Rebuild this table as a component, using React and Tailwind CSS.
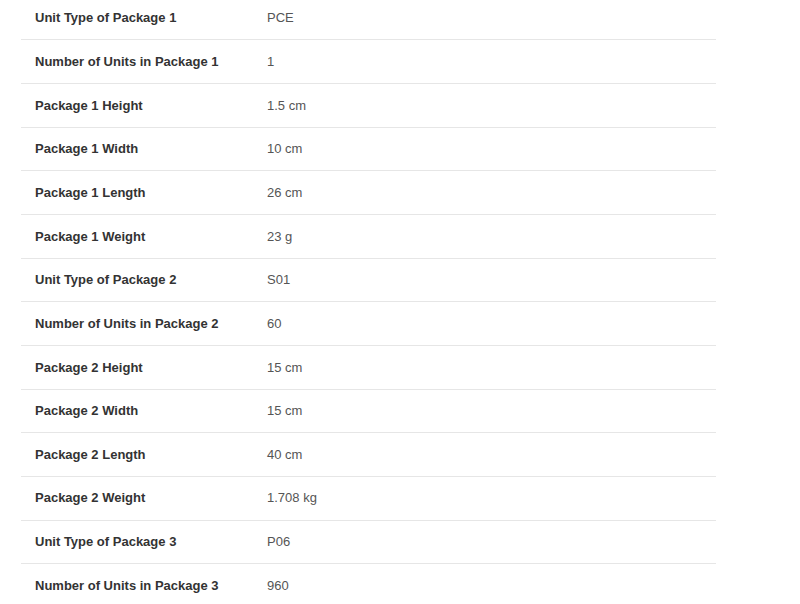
import React from 'react';

const rows = [
  ['Unit Type of Package 1', 'PCE'],
  ['Number of Units in Package 1', '1'],
  ['Package 1 Height', '1.5 cm'],
  ['Package 1 Width', '10 cm'],
  ['Package 1 Length', '26 cm'],
  ['Package 1 Weight', '23 g'],
  ['Unit Type of Package 2', 'S01'],
  ['Number of Units in Package 2', '60'],
  ['Package 2 Height', '15 cm'],
  ['Package 2 Width', '15 cm'],
  ['Package 2 Length', '40 cm'],
  ['Package 2 Weight', '1.708 kg'],
  ['Unit Type of Package 3', 'P06'],
  ['Number of Units in Package 3', '960'],
];

export default function App() {
  return (
    <div className="w-[800px] h-[604px] overflow-hidden bg-white font-['Liberation_Sans',Arial,sans-serif] text-[13px]">
      <div className="ml-[21px] w-[695px] -mt-[4.33px]">
        {rows.map(([label, value], i) => (
          <div
            key={label}
            className={`flex items-center h-[43.67px] ${i > 0 ? 'border-t border-[#e6e6e6]' : ''}`}
          >
            <div className="w-[232px] pl-[14px] font-bold text-[#333333]">{label}</div>
            <div className="pl-[14px] text-[#555555]">{value}</div>
          </div>
        ))}
      </div>
    </div>
  );
}
